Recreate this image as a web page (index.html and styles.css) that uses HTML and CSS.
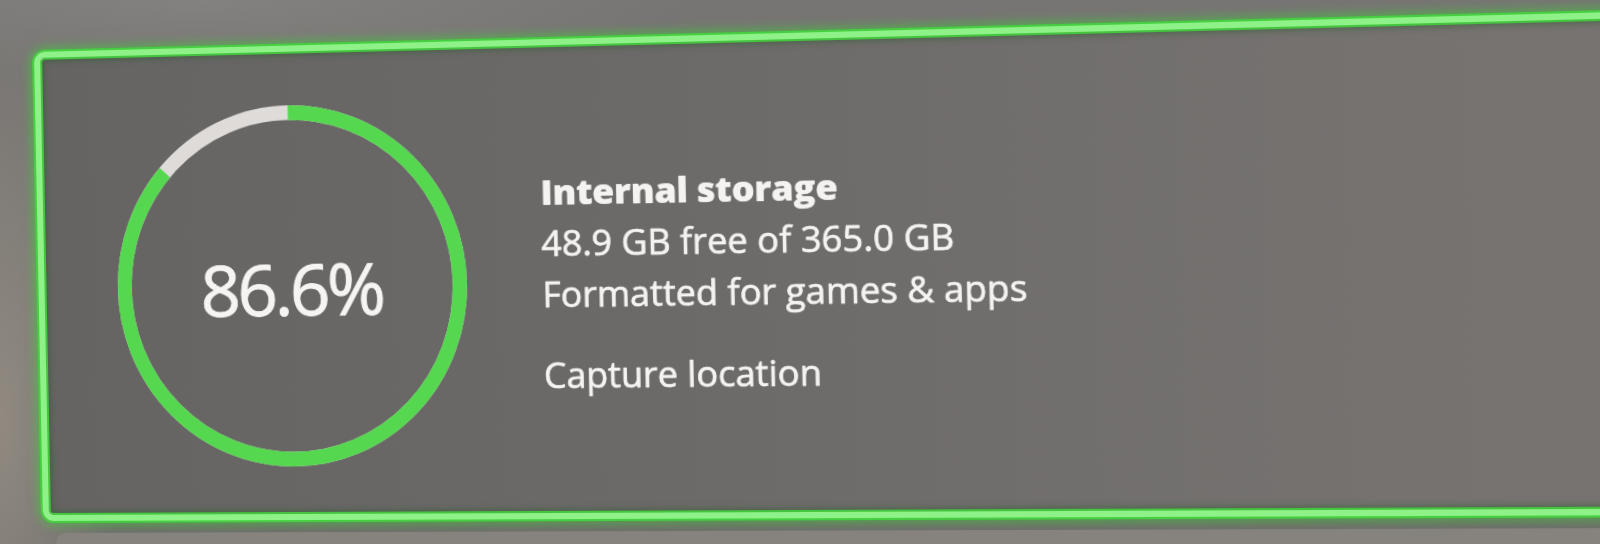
FILE: index.html
```html
<!DOCTYPE html>
<html lang="en">
<head>
<meta charset="utf-8">
<title>Storage devices</title>
<link rel="stylesheet" href="styles.css">
</head>
<body>
  <div class="screen">
    <section class="tile">
      <div class="ring">
        <svg class="ring-svg" viewBox="0 0 360 360" preserveAspectRatio="none" aria-hidden="true">
          <circle class="ring-track" cx="180" cy="180" r="172.75"/>
          <circle class="ring-used" cx="180" cy="180" r="172.75" transform="rotate(-90 180 180)"/>
        </svg>
        <div class="percent">86.6%</div>
      </div>
      <div class="info">
        <div class="title">Internal storage</div>
        <div class="line">48.9 GB free of 365.0 GB</div>
        <div class="line">Formatted for games &amp; apps</div>
        <div class="line capture">Capture location</div>
      </div>
    </section>
    <section class="next-tile"></section>
  </div>
</body>
</html>
```
FILE: styles.css
```css
html, body {
  margin: 0;
  height: 100%;
  overflow: hidden;
}

body {
  box-sizing: border-box;
  padding: 52px 0 0 34px;
  background:
    radial-gradient(ellipse 120px 400px at 0 420px, rgba(170, 160, 145, 0.55), rgba(170, 160, 145, 0) 100%),
    radial-gradient(ellipse 500px 80px at 200px 0, rgba(140, 138, 135, 0.6), rgba(140, 138, 135, 0) 100%),
    linear-gradient(180deg, #777573 0%, #6f6d6b 100%);
  font-family: "Open Sans", "Noto Sans", sans-serif;
}

/* the whole TV screen, seen slightly from the side */
.screen {
  width: 1700px;
  transform-origin: 0 0;
  transform: matrix3d(1, -0.025279, 0, -0.000046152,
                      0.019165, 0.99977, 0, -0.00000048,
                      0, 0, 1, 0,
                      0, 0, 0, 1);
}

.tile {
  box-sizing: border-box;
  height: 468.5px;
  display: flex;
  align-items: flex-start;
  padding: 53px 0 0 73px;
  border: 6px solid #8ef288;
  border-radius: 11px;
  background: linear-gradient(90deg, #656463 0%, #6c6a69 35%, #757270 75%, #797571 100%);
  box-shadow:
    0 0 0 2px #46cf40,
    0 0 10px 5px rgba(62, 205, 54, 0.55),
    inset 0 0 0 2px #45c53f,
    inset 0 0 6px 3px rgba(30, 90, 30, 0.5);
}

.ring {
  flex: none;
  width: 341px;
  height: 357px;
  display: grid;
}

.ring-svg,
.percent {
  grid-area: 1 / 1;
}

.ring-svg {
  width: 341px;
  height: 357px;
}

.ring-track {
  fill: none;
  stroke: #dedbd8;
  stroke-width: 14.5;
}

.ring-used {
  fill: none;
  stroke: #55d84f;
  stroke-width: 14.5;
  stroke-dasharray: 940 1200;
}

.percent {
  align-self: center;
  justify-self: center;
  margin-top: 5px;
  color: #f6f4f2;
  font-size: 69px;
  line-height: 66px;
  letter-spacing: -3.2px;
  -webkit-text-stroke: 0.8px #f6f4f2;
  text-shadow: 0 0 1px rgba(255, 255, 255, 0.7);
}

.info {
  margin: 65px 0 0 72px;
  color: #f5f3f1;
  font-size: 34px;
  line-height: 50px;
  white-space: nowrap;
  text-shadow: 0 0 1px rgba(255, 255, 255, 0.6);
}

.line {
  -webkit-text-stroke: 0.5px #f5f3f1;
}

.title {
  font-weight: 800;
  letter-spacing: -0.3px;
}

.capture {
  margin-top: 29.3px;
}

.next-tile {
  margin: 12.5px 0 0 13px;
  height: 200px;
  border-radius: 10px;
  background: #86837f;
}
```
